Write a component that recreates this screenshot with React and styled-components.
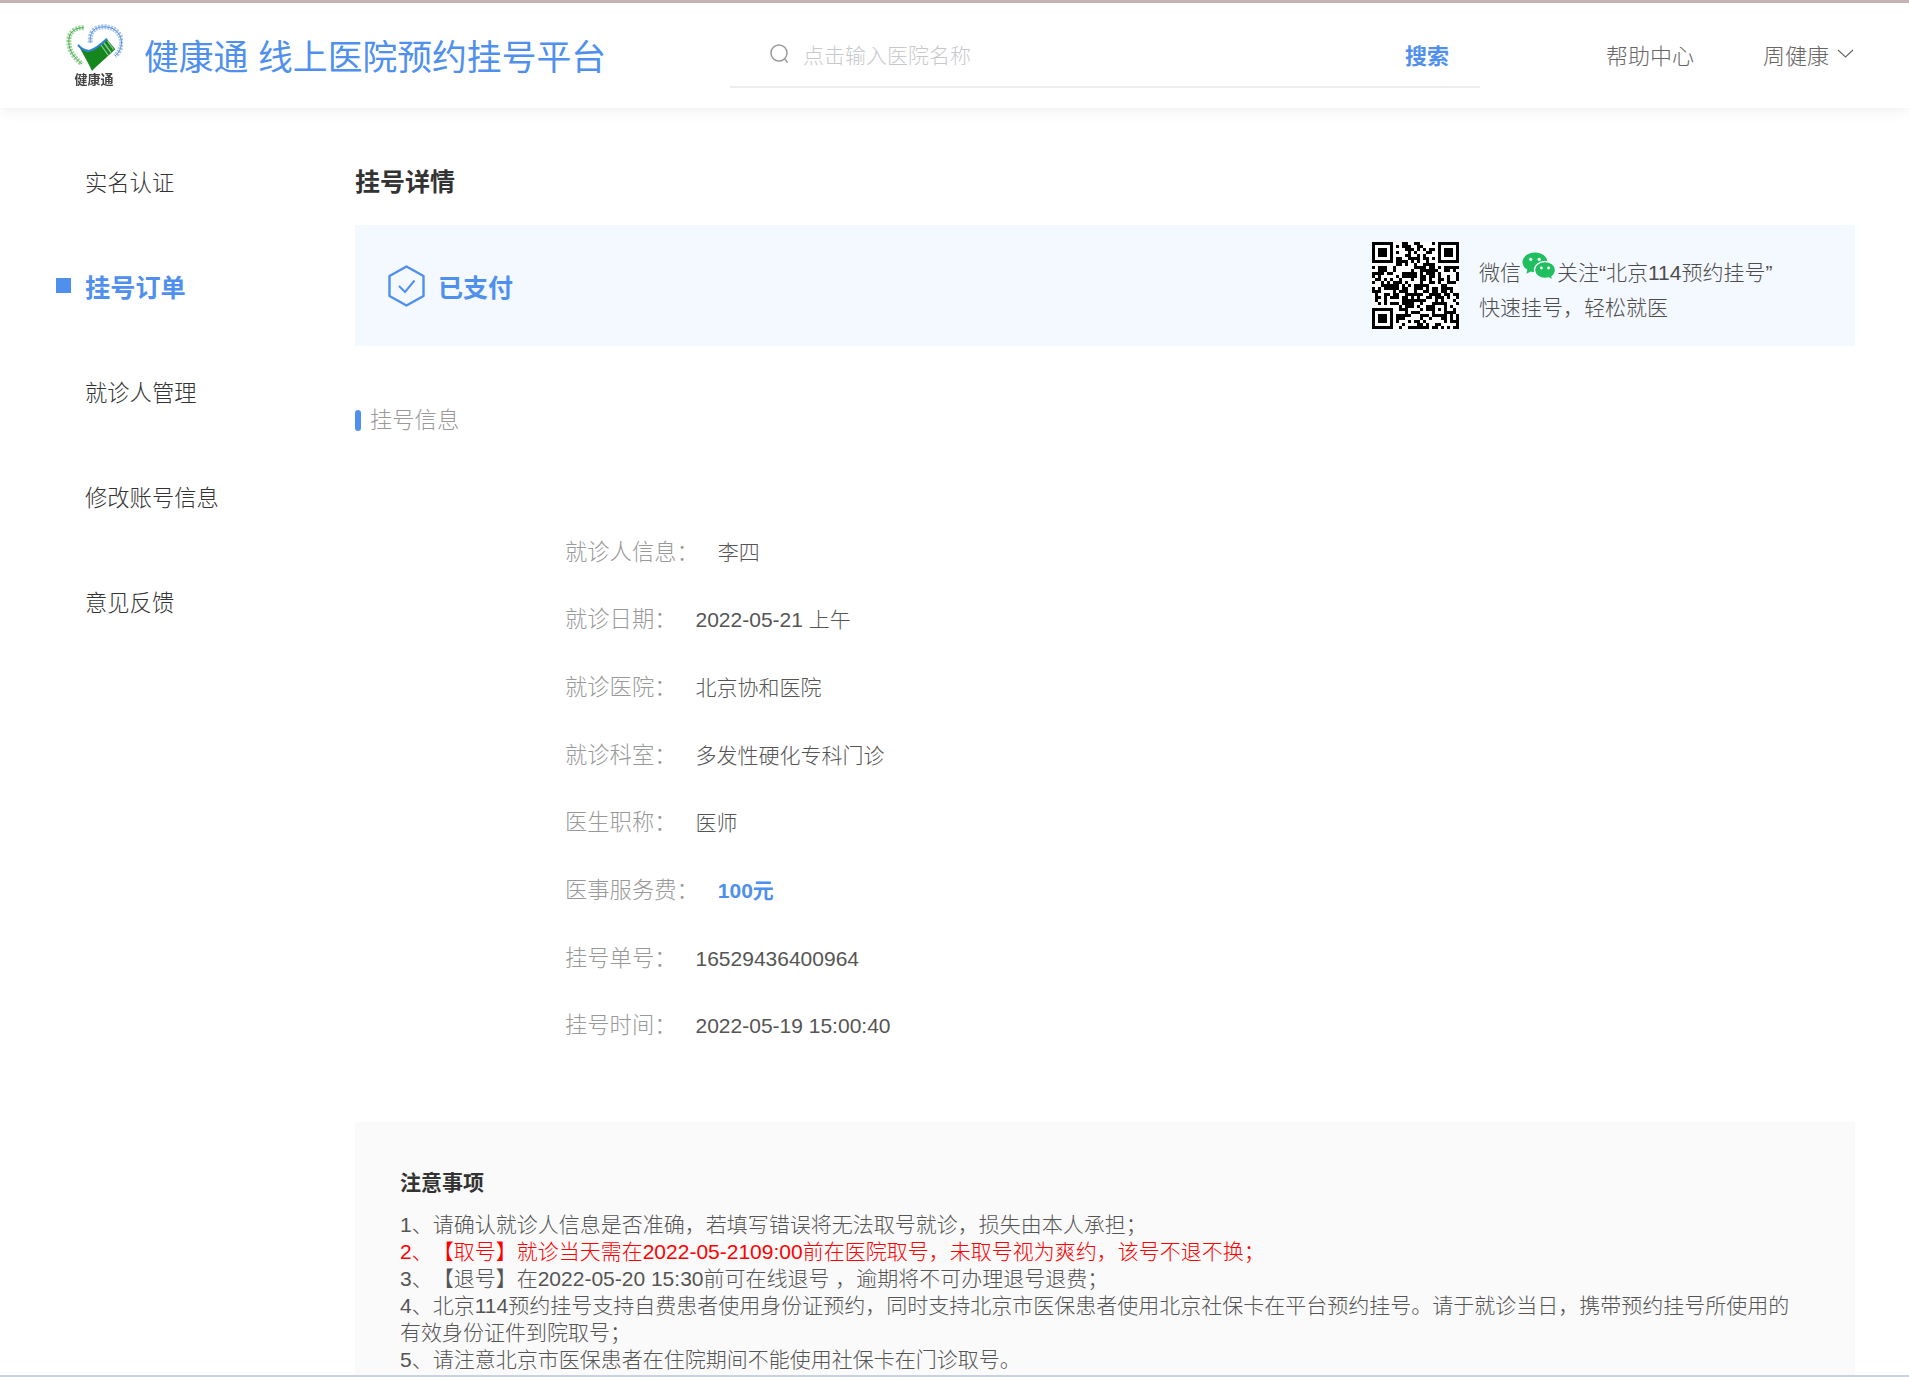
import React from "react";
import styled, { createGlobalStyle } from "styled-components";

const Global = createGlobalStyle`
  html, body { margin: 0; padding: 0; background: #fff; }
  body { font-family: "Liberation Sans", "Noto Sans CJK SC", sans-serif; color: #333; text-spacing-trim: space-all; }
  * { box-sizing: border-box; }
`;
const Page = styled.div`
  height: 1377px; overflow: hidden; display: flex; flex-direction: column;
  border-top: 3px solid #c6b4b4; border-bottom: 2px solid #c9d2de; background: #fff;
`;
const Header = styled.header`
  height: 105px; flex: none; display: flex; align-items: center; padding-left: 65px;
  box-shadow: 0 2px 14px rgba(0,0,0,.07); position: relative;
`;
const Logo = styled.div`
  width: 58px; height: 63px; display: flex; flex-direction: column; align-items: center;
`;
const LogoText = styled.span`
  font-size: 13px; line-height: 15px; font-weight: 700; color: #444; white-space: nowrap; filter: blur(.3px);
`;
const Title = styled.div`
  margin-left: 21px; font-size: 34.8px; line-height: 44px; color: #4f90ee; white-space: pre; width: 586px; font-weight: 400; padding-top: 4px;
`;
const Search = styled.div`
  width: 750px; height: 84px; padding: 0 31px 0 39px; border-bottom: 2px solid #eeeeee;
  display: flex; align-items: center; position: relative; top: -10px;
`;
const Placeholder = styled.span`
  margin-left: 12px; flex: 1; font-size: 21px; color: #c8c9cc; font-weight: 300; padding-top: 18px;
`;
const SearchIconWrap = styled.span`
  display: flex; padding-top: 18px;
`;
const SearchBtn = styled.span`
  font-size: 22px; font-weight: 700; color: #4f90ee; padding-top: 19px;
`;
const HeadLink = styled.span`
  font-size: 22px; color: #666; font-weight: 300; margin-left: ${p => p.$ml}px; white-space: nowrap; display: inline-flex; align-items: center; gap: 8px; padding-bottom: 4px;
`;
const Body = styled.div`
  flex: 1; display: grid; grid-template-columns: 355px 1500px; min-height: 0;
`;
const Side = styled.nav`
  padding-top: 20px; display: flex; flex-direction: column;
`;
const NavItem = styled.div`
  height: 105.2px; display: flex; align-items: center; padding-left: 85px; position: relative;
  font-size: ${p => p.$active ? 25.2 : 22.3}px; font-weight: ${p => p.$active ? 700 : 300};
  color: ${p => p.$active ? "#4f90ee" : "#333"};
`;
const NavMark = styled.i`
  position: absolute; left: 56px; top: 50%; margin-top: -8px; width: 15px; height: 15px; background: #4f90ee;
`;
const Main = styled.main`
  padding-top: 56px; display: flex; flex-direction: column; min-height: 0;
`;
const PageTitle = styled.h1`
  margin: 0; font-size: 25px; line-height: 36px; font-weight: 700; color: #333;
`;
const Status = styled.section`
  margin-top: 25px; height: 121px; background: #f4f8ff; display: flex; align-items: center; padding: 0 33px; flex: none;
`;
const StatusText = styled.span`
  margin-left: 13px; font-size: 25px; font-weight: 700; color: #4f90ee;
`;
const Qr = styled.div`
  margin-left: auto; width: 87px; height: 87px; flex: none; display: flex;
`;
const Promo = styled.div`
  margin-left: 20px; width: 343px; font-size: 21px; line-height: 35px; color: #4d4d4d; font-weight: 300; padding-top: 9px;
`;
const PromoLine = styled.div`
  display: flex; align-items: center; height: 35px; white-space: nowrap;
`;
const WeChat = styled.span`
  display: inline-flex; margin: -11px 1px 0 1px;
`;
const SectionHead = styled.h2`
  margin: 63px 0 0; font-size: 22.3px; line-height: 24px; font-weight: 300; color: #999; display: flex; align-items: center; gap: 9px;
  &::before { content: ""; width: 6px; height: 21px; margin-top: -2px; border-radius: 3px; background: #4f90ee; }
`;
const Info = styled.dl`
  margin: 85.5px 0 0; padding-left: 210px;
`;
const Row = styled.div`
  height: 67.7px; display: flex; align-items: baseline; line-height: 67.7px;
`;
const Label = styled.dt`
  color: #999; font-weight: 300; margin-right: 19px; font-size: 22.3px;
`;
const Value = styled.dd`
  margin: 0; font-size: 21px; color: ${p => p.$blue ? "#4f90ee" : "#555"}; font-weight: ${p => p.$blue ? 700 : 300};
`;
const Notice = styled.section`
  margin-top: 61.5px; flex: 1; background: #fafafa; padding: 46px 45px 0; min-height: 0;
`;
const NoticeTitle = styled.h3`
  margin: 0 0 13px; font-size: 21px; line-height: 30px; font-weight: 700; color: #333;
`;
const NoticeLine = styled.div`
  font-size: 21px; line-height: 27px; font-weight: 300; color: ${p => p.$red ? "#ff0000" : "#555"};
`;

function LogoMark() {
  return (
    <svg width="58" height="48" viewBox="0 0 58 48" fill="none">
      <path d="M18.7 3.7 C12 3.5 7.5 6 5 11 C2.5 17 4 26 9 32 C12 36 15 38.5 17 40" stroke="#9ad69a" strokeWidth="5" strokeDasharray="2 1.1" />
      <path d="M18.7 3.7 C12 3.5 7.5 6 5 11 C2.5 17 4 26 9 32 C12 36 15 38.5 17 40" stroke="#4fa85a" strokeWidth="1" />
      <path d="M25.3 18.7 C25 12 26 8.5 29 6 C33 2.5 40 2 46 4 C52 6 56 11 56.5 18 C56.5 24 54 29 50 32" stroke="#a9c6f0" strokeWidth="5" strokeDasharray="2 1.1" />
      <path d="M25.3 18.7 C25 12 26 8.5 29 6 C33 2.5 40 2 46 4 C52 6 56 11 56.5 18 C56.5 24 54 29 50 32" stroke="#5b93de" strokeWidth="1" />
      <path d="M13.7 22 C17 26 21 28 25.3 27 C31 25.5 37 20 42 15.3 L50.3 25.3 C42 33 33 41 27 47 C23 38 18 30 13.7 22 Z" fill="#16861f" />
      <path d="M13 21 C17 25.5 21 27.5 25.3 26.5 C31 25 37 19.5 42 14.8" stroke="#2f7fd6" strokeWidth="2" />
      <path d="M36 21 L43 31 M39 19 L46 28.5 M42.5 17 L48.5 25.5" stroke="#8cc79a" strokeWidth="1.3" />
    </svg>
  );
}

const qrModules = (() => {
  const n = 29; const m = [];
  let s = 20220519;
  for (let y = 0; y < n; y++) { m[y] = []; for (let x = 0; x < n; x++) { s = (s * 1103515245 + 12345) & 0x7fffffff; m[y][x] = (s >> 16) & 1; } }
  const finder = (ox, oy) => {
    for (let y = -1; y < 8; y++) for (let x = -1; x < 8; x++) {
      const px = ox + x, py = oy + y;
      if (px < 0 || py < 0 || px >= n || py >= n) continue;
      const ring = x >= 0 && x <= 6 && y >= 0 && y <= 6 && (x === 0 || x === 6 || y === 0 || y === 6);
      const core = x >= 2 && x <= 4 && y >= 2 && y <= 4;
      m[py][px] = ring || core ? 1 : 0;
    }
  };
  finder(0, 0); finder(n - 7, 0); finder(0, n - 7);
  for (let y = -2; y <= 2; y++) for (let x = -2; x <= 2; x++) {
    m[n - 7 + y][n - 7 + x] = Math.max(Math.abs(x), Math.abs(y)) === 1 ? 0 : 1;
  }
  return m;
})();

function QrCode() {
  const n = qrModules.length;
  return (
    <svg width="87" height="87" viewBox={`0 0 ${n} ${n}`} shapeRendering="crispEdges">
      <rect width={n} height={n} fill="#fff" />
      {qrModules.flatMap((row, y) => row.map((v, x) => v ? <rect key={`${x}-${y}`} x={x} y={y} width="1" height="1" fill="#000" /> : null))}
    </svg>
  );
}

function WeChatIcon() {
  return (
    <svg width="34" height="30" viewBox="0 0 34 30">
      <path d="M13 0.5 C20 0.5 25.5 4.8 25.5 10.2 C25.5 15.6 20 20 13 20 C11.5 20 10 19.8 8.8 19.4 L4.5 21.8 L5.3 17.6 C2.2 15.8 0.5 13.2 0.5 10.2 C0.5 4.8 6 0.5 13 0.5 Z" fill="#1fbe5e" />
      <path d="M23 9.5 C29 9.5 33.5 13.2 33.5 18 C33.5 20.6 32.2 22.9 30 24.5 L30.7 28.4 L26.8 26 C25.6 26.3 24.4 26.5 23 26.5 C17.2 26.5 12.5 22.7 12.5 18 C12.5 13.2 17.2 9.5 23 9.5 Z" fill="#1fbe5e" stroke="#f4f8ff" strokeWidth="1.4" />
      <circle cx="8.7" cy="7.3" r="1.6" fill="#fff" /><circle cx="17.2" cy="7.3" r="1.6" fill="#fff" />
      <circle cx="19.4" cy="16" r="1.4" fill="#fff" /><circle cx="26.6" cy="16" r="1.4" fill="#fff" />
    </svg>
  );
}

const rows = [
  ["就诊人信息：", "李四"],
  ["就诊日期：", "2022-05-21 上午"],
  ["就诊医院：", "北京协和医院"],
  ["就诊科室：", "多发性硬化专科门诊"],
  ["医生职称：", "医师"],
  ["医事服务费：", "100元", true],
  ["挂号单号：", "16529436400964"],
  ["挂号时间：", "2022-05-19 15:00:40"],
];

export default function App() {
  return (
    <>
      <Global />
      <Page>
        <Header>
          <Logo>
            <LogoMark />
            <LogoText>健康通</LogoText>
          </Logo>
          <Title>健康通 线上医院预约挂号平台</Title>
          <Search>
            <SearchIconWrap>
              <svg width="22" height="22" viewBox="0 0 22 22" fill="none" stroke="#9a9a9a" strokeWidth="1.5">
                <circle cx="10" cy="10" r="8" /><path d="M15.8 16 L18.6 19.5" />
              </svg>
            </SearchIconWrap>
            <Placeholder>点击输入医院名称</Placeholder>
            <SearchBtn>搜索</SearchBtn>
          </Search>
          <HeadLink $ml={126}>帮助中心</HeadLink>
          <HeadLink $ml={69}>周健康
            <svg width="17" height="9" viewBox="0 0 17 9" fill="none" stroke="#666" strokeWidth="1.1"><path d="M1 1 L8.5 8 L16 1" /></svg>
          </HeadLink>
        </Header>
        <Body>
          <Side>
            <NavItem>实名认证</NavItem>
            <NavItem $active><NavMark />挂号订单</NavItem>
            <NavItem>就诊人管理</NavItem>
            <NavItem>修改账号信息</NavItem>
            <NavItem>意见反馈</NavItem>
          </Side>
          <Main>
            <PageTitle>挂号详情</PageTitle>
            <Status>
              <svg width="37" height="42" viewBox="0 0 37 42" fill="none" stroke="#4f90ee" strokeWidth="2.4">
                <path d="M18.5 1.5 L35.5 11 V31 L18.5 40.5 L1.5 31 V11 Z" strokeLinejoin="round" />
                <path d="M11 21 L17 27 L26.5 15.5" strokeWidth="2" />
              </svg>
              <StatusText>已支付</StatusText>
              <Qr><QrCode /></Qr>
              <Promo>
                <PromoLine>微信<WeChat><WeChatIcon /></WeChat>关注“北京114预约挂号”</PromoLine>
                <PromoLine>快速挂号，轻松就医</PromoLine>
              </Promo>
            </Status>
            <SectionHead>挂号信息</SectionHead>
            <Info>
              {rows.map(([l, v, blue]) => (
                <Row key={l}><Label>{l}</Label><Value $blue={blue}>{v}</Value></Row>
              ))}
            </Info>
            <Notice>
              <NoticeTitle>注意事项</NoticeTitle>
              <NoticeLine>1、请确认就诊人信息是否准确，若填写错误将无法取号就诊，损失由本人承担；</NoticeLine>
              <NoticeLine $red>2、【取号】就诊当天需在2022-05-2109:00前在医院取号，未取号视为爽约，该号不退不换；</NoticeLine>
              <NoticeLine>3、【退号】在2022-05-20 15:30前可在线退号 ，逾期将不可办理退号退费；</NoticeLine>
              <NoticeLine>4、北京114预约挂号支持自费患者使用身份证预约，同时支持北京市医保患者使用北京社保卡在平台预约挂号。请于就诊当日，携带预约挂号所使用的有效身份证件到院取号；</NoticeLine>
              <NoticeLine>5、请注意北京市医保患者在住院期间不能使用社保卡在门诊取号。</NoticeLine>
            </Notice>
          </Main>
        </Body>
      </Page>
    </>
  );
}
